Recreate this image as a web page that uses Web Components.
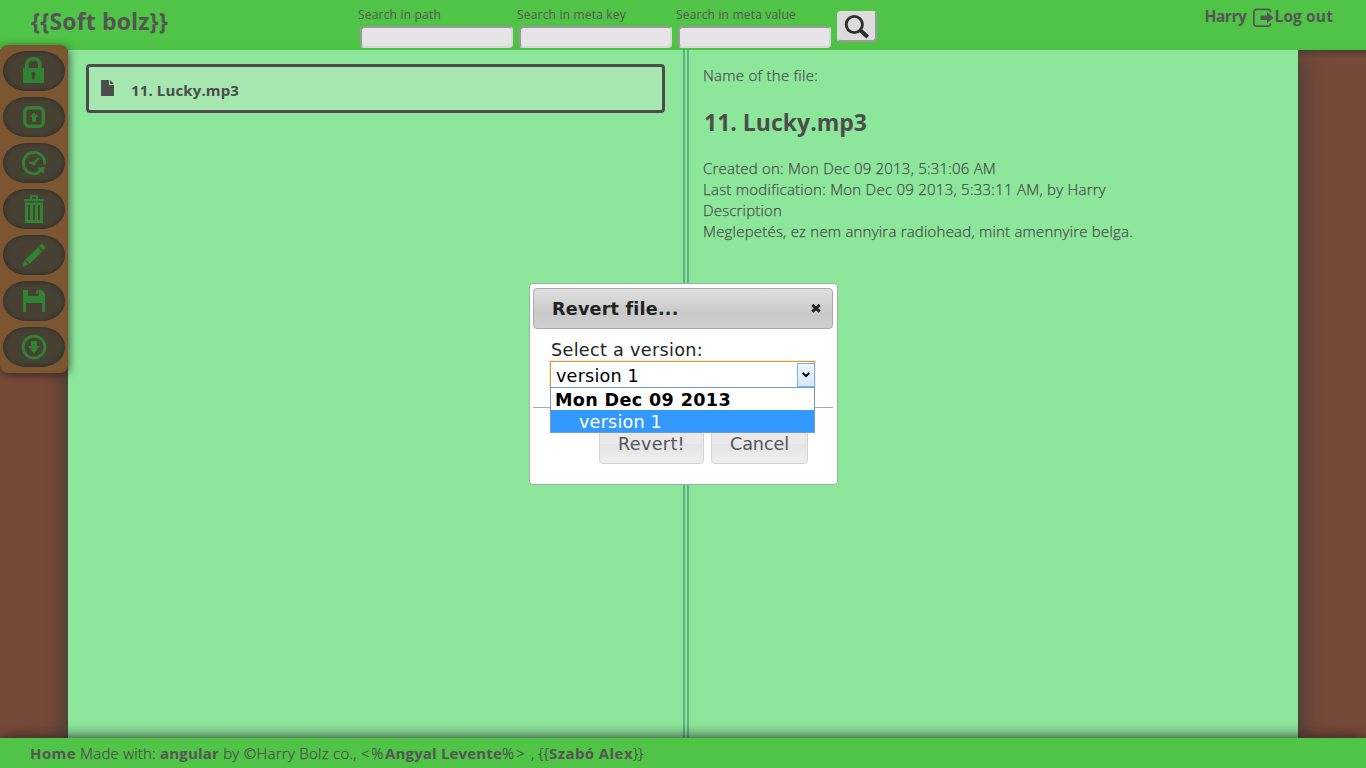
<!DOCTYPE html>
<html lang="en">
<head>
<meta charset="utf-8">
<title>Soft bolz</title>
<style>
html,body{margin:0;height:100%;overflow:hidden}
body{font:300 15px/21px "Open Sans","Noto Sans",sans-serif;color:#4c4c4c}
</style>
</head>
<body>
<bolz-app></bolz-app>
<script>
const define=(name,html,init)=>customElements.define(name,class extends HTMLElement{
  constructor(){super();this.attachShadow({mode:'open'}).innerHTML=html;}
  connectedCallback(){if(init)init.call(this,this.shadowRoot);}
});

/* A run of text that is tracked to fill the width given in its "w" attribute. */
define('fit-text','<style>:host{display:inline-block;white-space:pre;flex:none}span{display:inline-block}</style><span><slot></slot></span>',function(r){
  const w=+this.getAttribute('w'),s=r.querySelector('span');
  const n=this.textContent.length;
  s.style.letterSpacing=((w-s.getBoundingClientRect().width)/n)+'px';
  this.style.width=w+'px';
});

define('search-field',`<style>
:host{display:block;width:159px;height:50px;box-sizing:border-box;padding-top:5px;font:400 12px/20px "Open Sans",sans-serif}
fit-text{display:block}
.box{box-sizing:border-box;width:153px;height:22px;margin:1px 0 0 2px;background:#e5e5e5;border:2px solid;border-color:#999 #d8d8d8 #d8d8d8 #999;border-radius:4px}
</style><fit-text></fit-text><div class="box"></div>`,function(r){
  const t=r.querySelector('fit-text');
  t.textContent=this.getAttribute('label');
  t.setAttribute('w',this.getAttribute('w'));t.connectedCallback();
});

define('app-header',`<style>
:host{display:flex;height:50px;background:linear-gradient(#50c446 0 36px,#4dc043);align-items:flex-start;color:#555}
.logo{width:327px;padding-left:31px;font-weight:700;font-size:23px;line-height:43px}
.go{box-sizing:border-box;width:40px;height:31px;margin:11px 0 0 2px;background:#dcdcdc;border:2px solid;border-color:#dedede #999 #999 #dedede;border-radius:4px}
.go svg{display:block;margin:1px 0 0 5px}
.user{margin-left:auto;display:flex;padding-right:33px;font-weight:700;font-size:15.500px;line-height:33px}
.user svg{margin:8px 0 0 6px}
</style>
<div class="logo"><fit-text w="137">{{Soft bolz}}</fit-text></div>
<search-field label="Search in path" w="83"></search-field>
<search-field label="Search in meta key" w="109"></search-field>
<search-field label="Search in meta value" w="120"></search-field>
<div class="go"><svg width="26" height="26" viewBox="0 0 26 26" fill="none" stroke="#2e2e2e"><circle cx="10.3" cy="10.500" r="8.1" stroke-width="2.9"/><path d="M16 16l7.7 7" stroke-width="4"/></svg></div>
<div class="user"><fit-text w="42">Harry</fit-text><svg width="22" height="20" viewBox="0 0 22 20"><path d="M17.500 4.2V4a2.6 2.6 0 0 0-2.6-2.6H3.500A2.6 2.6 0 0 0 .9 4v11.5a2.6 2.6 0 0 0 2.6 2.6h11.400a2.6 2.6 0 0 0 2.6-2.6" fill="none" stroke="#555" stroke-width="1.7"/><path d="M7.500 7.500H14V4l6.500 5.700-6.500 5.600V12H7.500z" fill="#555"/></svg><fit-text class="out" w="58.500">Log out</fit-text></div>`);

define('tool-button',`<style>
:host{display:flex;box-sizing:border-box;width:62px;height:40px;border-radius:24px/20px;background:#474133;box-shadow:inset 0 0 4px rgba(20,26,30,.65);align-items:center;justify-content:center}
::slotted(svg){display:block;fill:#328233}
</style><slot></slot>`);

define('tool-bar',`<style>
:host{display:flex;flex-direction:column;gap:6px;box-sizing:border-box;width:68px;height:328px;padding:6px 3px;background:#7b5630;border-radius:8px;box-shadow:1px 2px 8px rgba(30,30,30,.75)}
svg{width:28px;height:28px}
.ln{fill:none;stroke:#328233}
</style>
<tool-button><svg viewBox="0 0 28 28"><path class="ln" stroke-width="3.6" d="M6.8 13V8c0-4.1 2.4-6.2 6.5-6.2S19.800 3.900 19.800 8v5"/><path fill-rule="evenodd" d="M3 11h21v15H3zM13.500 14.800a2.200 2.200 0 0 0-1.200 4v3.400h2.300v-3.400a2.200 2.200 0 0 0-1.100-4z"/></svg></tool-button>
<tool-button><svg viewBox="0 0 28 28"><rect class="ln" x="4.700" y="4.700" width="18.600" height="18.600" rx="4.500" stroke-width="3.400"/><path d="M14 9.500l4.300 4.500H16v4.700h-4V14H9.700z"/></svg></tool-button>
<tool-button><svg viewBox="0 0 28 28"><path class="ln" stroke-width="2.800" d="M24.700 15.500A10.700 10.700 0 1 0 19.500 23.300"/><path class="ln" stroke-width="2.200" d="M18.800 9.200L13.600 14.300 9 13.700"/><circle cx="13.800" cy="14.400" r="2"/><path d="M24.700 17.800l-7.500 1 2.200 2-2.400 2 1.700 1.700 2.400-2.100 2.300 2.500z"/></svg></tool-button>
<tool-button><svg viewBox="0 0 28 28"><path fill-rule="evenodd" d="M4 4h6V1.500Q10 0 11.500 0h5Q18 0 18 1.500V4h6v2.300H4zM12 4h4V2h-4zM5 7.500h18V28H5zM8 10v15h2V10zM13 10v15h2V10zM18 10v15h2V10z"/></svg></tool-button>
<tool-button><svg viewBox="0 0 28 28"><path d="M21.700 2.500l4.200 4.200-2.600 2.600-4.200-4.200zM18 6.200l4.200 4.200L9.700 22.700l-4.200-4.200zM4.700 19.500l4 4L2 26z"/></svg></tool-button>
<tool-button><svg viewBox="0 0 28 28"><path d="M3 3h5v6h10.500V3h3.200L25 6.500V25h-2.800v-9H6v9H3zM16.500 3.200h1.400v3.600h-1.400z"/></svg></tool-button>
<tool-button><svg viewBox="0 0 28 28"><circle class="ln" cx="14" cy="14" r="10.900" stroke-width="2.800"/><path d="M11 8h6v5h3.200L14 20.500 7.800 13H11z"/></svg></tool-button>`);

define('file-item',`<style>
:host{display:flex;box-sizing:border-box;width:579px;height:49px;border:3px solid #4c4c4c;border-radius:4px;background:#a6e7b0;padding-left:12px;font-weight:700;font-size:15px;line-height:46px}
svg{margin:13px 17px 0 0}
</style><svg width="13" height="16" viewBox="0 0 13 16" fill="#4c4c4c"><path d="M0 0h8v5h5v11H0zM9 0l4 4H9z"/></svg><fit-text w="108"><slot></slot></fit-text>`);

define('file-details',`<style>
:host{display:flex;flex-direction:column;align-items:flex-start;padding:15px 0 0 14px}
:host>fit-text,fit-text{-webkit-text-stroke:.25px #4c4c4c}
h2 fit-text{-webkit-text-stroke:0}
h2{margin:20px 0 19px 1px;font-size:23px;line-height:33px;font-weight:700}
</style>
<fit-text w="115">Name of the file:</fit-text>
<h2><fit-text w="163">11. Lucky.mp3</fit-text></h2>
<fit-text w="293">Created on: Mon Dec 09 2013, 5:31:06 AM</fit-text>
<fit-text w="403">Last modification: Mon Dec 09 2013, 5:33:11 AM, by Harry</fit-text>
<fit-text w="79">Description</fit-text>
<fit-text w="430">Meglepetés, ez nem annyira radiohead, mint amennyire belga.</fit-text>`);

define('app-footer',`<style>
:host{display:flex;box-sizing:border-box;height:30px;padding-left:30px;background:#50c446;box-shadow:0 0 15px #222;line-height:31px;color:#4c4c4c;position:relative}
fit-text{-webkit-text-stroke:.25px #4c4c4c}
b{font-weight:700;color:#555}
b fit-text{-webkit-text-stroke:0}
</style>
<b><fit-text w="46">Home</fit-text></b><fit-text w="84"> Made with: </fit-text><b><fit-text w="59">angular</fit-text></b><fit-text w="142"> by ©Harry Bolz co., </fit-text><fit-text w="24">&lt;%</fit-text><b><fit-text w="117">Angyal Levente</fit-text></b><fit-text w="25">%&gt;</fit-text><fit-text w="22"> , {{</fit-text><b><fit-text w="84">Szabó Alex</fit-text></b><fit-text w="10">}}</fit-text>`);

define('version-select',`<style>
:host{display:block;position:relative;width:265px;height:27px;color:#000}
.field{box-sizing:border-box;display:flex;justify-content:space-between;height:27px;background:#fff;border:1px solid #d99c3b;outline:1px solid rgba(240,180,80,.3);outline-offset:0;padding-left:5px;line-height:28px}
.arrow{box-sizing:border-box;width:18px;height:24px;margin:1px -1px 0 0;border:1px solid #7eb0e4;background:linear-gradient(#ecf4fd,#d5e8fb);display:flex;align-items:center;justify-content:center}
.list{position:absolute;left:0;top:26px;box-sizing:border-box;width:265px;height:46px;background:#fff;border:1px solid #719cc6;line-height:24px}
.group{height:22px;font-weight:700;padding-left:4px}
.opt{position:relative;height:22px;background:#39f;color:#fff;padding-left:28px;line-height:24px}
</style>
<div class="field"><fit-text w="83">version 1</fit-text><div class="arrow"><svg width="8" height="6" viewBox="0 0 8 6"><path d="M.8 1l3.200 3.200L7.200 1" fill="none" stroke="#000" stroke-width="2"/></svg></div></div>
<div class="list"><div class="group"><fit-text w="176">Mon Dec 09 2013</fit-text></div><div class="opt"><fit-text w="83">version 1</fit-text></div></div>`);

define('dialog-button',`<style>
:host{display:block;box-sizing:border-box;height:41px;border:1px solid #d3d3d3;border-radius:4px;background:linear-gradient(#e9e9e9 0 50%,#e3e3e3 52%,#f0f0f0);padding:0 18px;line-height:40px;color:#555}
</style><slot></slot>`);

define('revert-dialog',`<style>
:host{display:block;box-sizing:border-box;width:309px;height:202px;border:1px solid #aaa;border-radius:4px;background:#fff;padding:4px 4px 0 3px;font:400 17.600px/23px "DejaVu Sans",Verdana,sans-serif;color:#222}
.title{box-sizing:border-box;height:41px;border:1px solid #aaa;border-radius:4px;background:linear-gradient(#e0e0e0,#c9c9c9 60%,#cfcfcf);display:flex;justify-content:space-between;padding:0 11px 0 18px;font-weight:700;line-height:41px}
.title svg{margin-top:14px}
.body{height:78px;box-sizing:border-box;padding:10px 0 0 17px}
.body>fit-text{display:block;margin-left:1px}
.body version-select{margin-top:-1px;z-index:2}
.foot{border-top:1px solid #aaa;display:flex;justify-content:flex-end;gap:7px;padding:15px 25px 0 0}
</style>
<div class="title"><fit-text w="126">Revert file...</fit-text><svg width="10" height="10" viewBox="0 0 10 10"><path d="M1.300 1.800l7.400 6.800M8.700 1.800L1.300 8.600" stroke="#222" stroke-width="3"/></svg></div>
<div class="body"><fit-text w="152">Select a version:</fit-text><version-select></version-select></div>
<div class="foot"><dialog-button><fit-text w="67">Revert!</fit-text></dialog-button><dialog-button><fit-text w="59">Cancel</fit-text></dialog-button></div>`);

define('bolz-app',`<style>
:host{display:grid;grid-template-rows:50px 1fr 30px;height:100vh;overflow:hidden;position:relative;background:linear-gradient(#4e4038,#784a39 8px) 0 50px no-repeat #784a39}
main{display:grid;grid-template-columns:615px 1fr;margin:0 68px;background:#8de79b;box-shadow:0 6px 25px #2e3a38;clip-path:inset(0 -68px 0 -68px)}
.files{padding:14px 0 0 18px}
file-details{border-left:6px double #5ab283}
tool-bar{position:absolute;left:0;top:45px}
revert-dialog{position:absolute;left:529px;top:283px}
</style>
<app-header></app-header>
<main><div class="files"><file-item>11. Lucky.mp3</file-item></div><file-details></file-details></main>
<app-footer></app-footer>
<tool-bar></tool-bar>
<revert-dialog></revert-dialog>`,function(r){
  /* Slotted labels reach their text box only once the tree is attached. */
  const item=r.querySelector('file-item'),t=item.shadowRoot.querySelector('fit-text'),s=t.shadowRoot.querySelector('span');
  s.style.letterSpacing='0';
  s.style.letterSpacing=((108-s.getBoundingClientRect().width)/item.textContent.length)+'px';
});
</script>
</body>
</html>
